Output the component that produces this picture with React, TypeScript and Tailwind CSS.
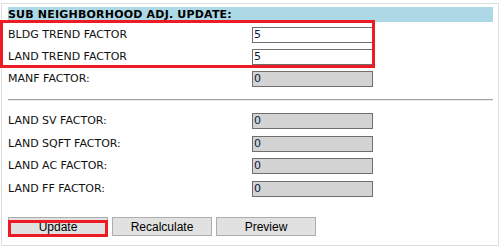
import React from 'react'

const topRows = [
  { label: 'BLDG TREND FACTOR', value: '5', editable: true },
  { label: 'LAND TREND FACTOR', value: '5', editable: true },
  { label: 'MANF FACTOR:', value: '0', editable: false },
]

const landRows = [
  { label: 'LAND SV FACTOR:', value: '0' },
  { label: 'LAND SQFT FACTOR:', value: '0' },
  { label: 'LAND AC FACTOR:', value: '0' },
  { label: 'LAND FF FACTOR:', value: '0' },
]

function FieldRow({ label, value, editable, h }: { label: string; value: string; editable: boolean; h: string }) {
  return (
    <div className={`flex items-center ${h}`}>
      <label className="w-[244px] text-[11px] text-[#111]">{label}</label>
      <input
        type="text"
        readOnly={!editable}
        defaultValue={value}
        className={`w-[121px] h-[16px] border border-[#6f6f6f] px-[1px] text-[11px] text-[#0b1a40] outline-none ${
          editable ? 'bg-white' : 'bg-[#d3d3d3]'
        }`}
      />
    </div>
  )
}

export default function App() {
  return (
    <div className="relative w-[500px] h-[251px] bg-white overflow-hidden" style={{ fontFamily: '"DejaVu Sans", Verdana, sans-serif' }}>
      <div className="ml-[1px] mt-[3px] w-[498px] h-[243px] border border-[#dedede] px-[6px] pt-[3px]">
        {/* header */}
        <div className="w-[485px] h-[15px] bg-[#add8e6] flex items-center">
          <span className="text-[11px] font-bold text-black leading-none tracking-[0.2px]">SUB NEIGHBORHOOD ADJ. UPDATE:</span>
        </div>

        <div className="mt-[2px]">
          {topRows.map((r) => (
            <FieldRow key={r.label} label={r.label} value={r.value} editable={r.editable} h="h-[22px]" />
          ))}
        </div>

        <div className="mt-[9px] w-[485px] border-t border-[#a0a0a0] border-b border-b-[#ececec]" />

        <div className="mt-[9px]">
          {landRows.map((r) => (
            <FieldRow key={r.label} label={r.label} value={r.value} editable={false} h="h-[22.5px]" />
          ))}
        </div>

        {/* buttons */}
        <div className="mt-[17px] flex gap-[4px]" style={{ fontFamily: '"Liberation Sans", Arial, sans-serif' }}>
          {['Update', 'Recalculate', 'Preview'].map((b) => (
            <button
              key={b}
              className="w-[100px] h-[19px] border border-[#adadad] bg-[#e1e1e1] text-[12px] text-black leading-none"
            >
              {b}
            </button>
          ))}
        </div>
      </div>

      {/* annotation boxes */}
      <div className="absolute left-0 top-[20px] w-[375px] h-[48px] border-[3px] border-[#ed1c24] pointer-events-none" />
      <div className="absolute left-[8px] top-[220px] w-[100px] h-[17px] border-[3px] border-[#ed1c24] pointer-events-none" />
    </div>
  )
}
